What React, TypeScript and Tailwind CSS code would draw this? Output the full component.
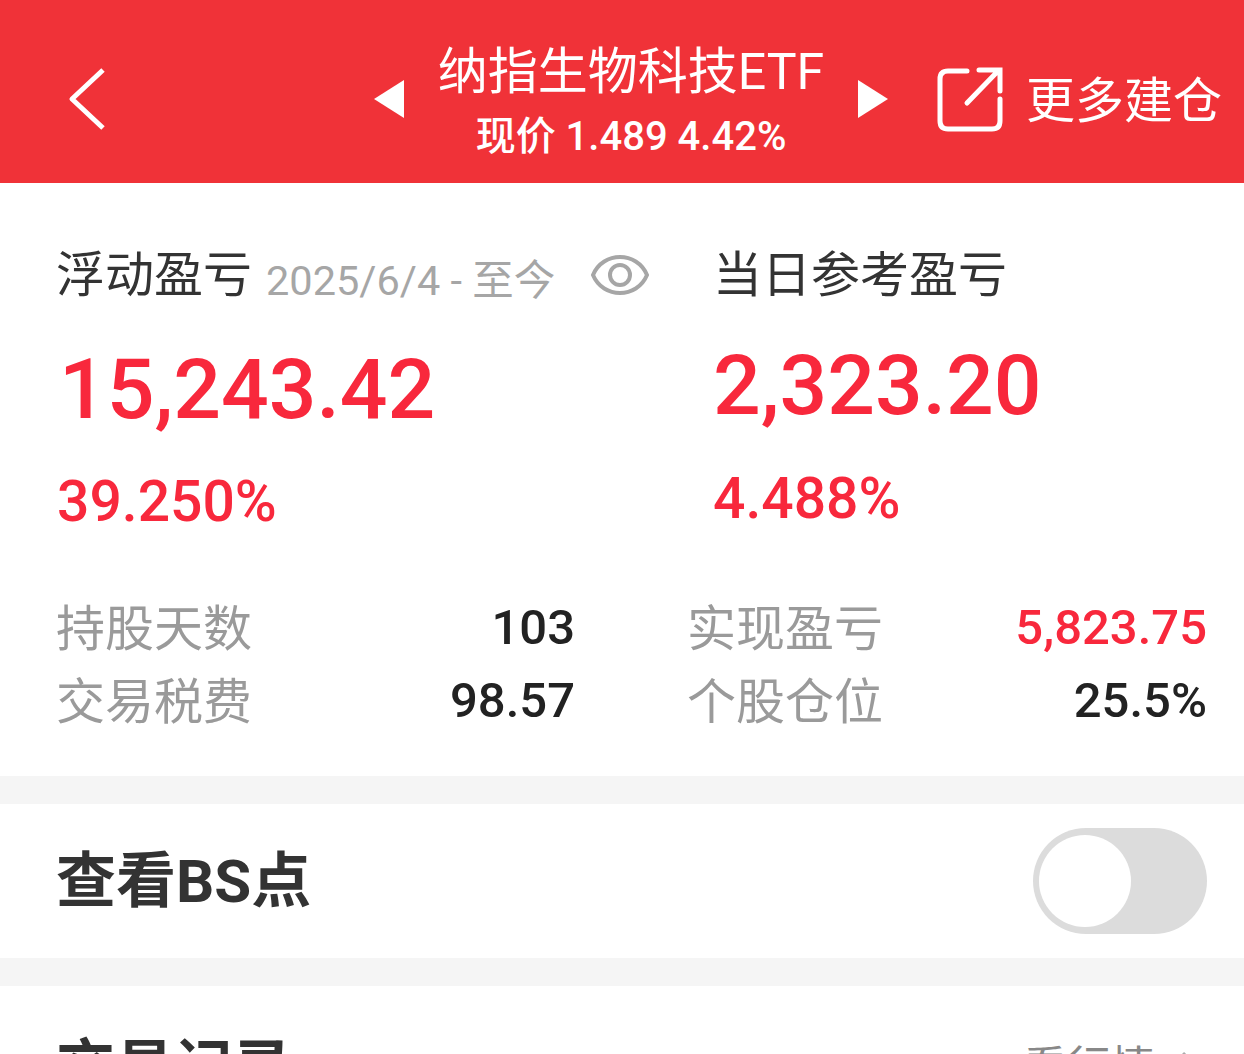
const sans = "font-['Roboto','Noto_Sans_CJK_SC',sans-serif]";

function StatRow({ label, value, red }: { label: string; value: string; red?: boolean }) {
  return (
    <div className="flex h-[73px] items-center justify-between">
      <span className="mt-[2px] text-[49px] leading-none text-[#9a9a9a]">{label}</span>
      <span className={`mt-[-3px] text-[49px] leading-none font-medium ${red ? "text-[#f8283c]" : "text-[#222222]"}`}>{value}</span>
    </div>
  );
}

export default function App() {
  return (
    <div className={`h-[1054px] w-[1244px] overflow-hidden bg-white ${sans}`}>
      <header className="flex h-[183px] items-center bg-[#f03238] pt-[14px] pl-[68px] text-white">
        <svg width="38" height="64" viewBox="0 0 38 64" fill="none" stroke="white" strokeWidth="5">
          <path d="M35 3 L4 32 L35 61" strokeLinejoin="round" />
        </svg>
        <svg width="30" height="38" viewBox="0 0 30 38" fill="white" className="ml-[268px]">
          <path d="M30 0 V38 L0 19 Z" />
        </svg>
        <div className="mt-[4px] flex w-[454px] flex-col items-center">
          <div className="text-[50px] leading-[64px]">纳指生物科技ETF</div>
          <div className="mt-[8px] text-[40px] leading-[50px] font-medium">现价 1.489 4.42%</div>
        </div>
        <svg width="30" height="38" viewBox="0 0 30 38" fill="white">
          <path d="M0 0 V38 L30 19 Z" />
        </svg>
        <svg width="66" height="66" viewBox="0 0 66 66" fill="none" stroke="white" strokeWidth="5" strokeLinecap="round" className="mt-[2px] ml-[49px]">
          <path d="M30 4 H11 Q3 4 3 12 V54 Q3 62 11 62 H55 Q63 62 63 54 V32" />
          <path d="M30 36 L61 4 M42 3 H63 V24" />
        </svg>
        <span className="mt-[6px] ml-[23px] text-[49px] leading-none whitespace-nowrap">更多建仓</span>
      </header>

      <section className="h-[593px] pr-[37px] pl-[56px]">
        <div className="flex pt-[64px]">
          <div className="w-[657px]">
            <div className="flex h-[56px] items-center">
              <span className="text-[49px] leading-none text-[#333333]">浮动盈亏</span>
              <span className="mt-[12px] ml-[14px] text-[41.5px] leading-none text-[#a6a6a6]">2025/6/4 - 至今</span>
              <svg width="58" height="42" viewBox="0 0 58 42" fill="none" stroke="#a6a6a6" strokeWidth="4" className="ml-[36px]">
                <path d="M2 21 C12 -3 46 -3 56 21 C46 45 12 45 2 21 Z" />
                <circle cx="29" cy="21" r="10" />
              </svg>
            </div>
            <div className="mt-[42px] ml-[3px] text-[84px] leading-[90px] font-medium text-[#f8283c]">15,243.42</div>
            <div className="mt-[32px] ml-[1px] text-[57px] leading-[70px] font-medium text-[#f8283c]">39.250%</div>
          </div>
          <div>
            <div className="flex h-[56px] items-center text-[49px] leading-none text-[#333333]">当日参考盈亏</div>
            <div className="mt-[38px] text-[84px] leading-[90px] font-medium text-[#f8283c]">2,323.20</div>
            <div className="mt-[33px] text-[57px] leading-[70px] font-medium text-[#f8283c]">4.488%</div>
          </div>
        </div>
        <div className="mt-[55px] grid grid-cols-[519px_520px] gap-x-[112px]">
          <div>
            <StatRow label="持股天数" value="103" />
            <StatRow label="交易税费" value="98.57" />
          </div>
          <div>
            <StatRow label="实现盈亏" value="5,823.75" red />
            <StatRow label="个股仓位" value="25.5%" />
          </div>
        </div>
      </section>

      <div className="h-[28px] bg-[#f5f5f5]" />

      <section className="flex h-[154px] items-center justify-between pr-[37px] pl-[56px]">
        <span className="mt-[2px] text-[60px] leading-none font-bold text-[#333333]">查看BS点</span>
        <div className="flex h-[106px] w-[174px] items-center rounded-full bg-[#dcdcdc] pl-[6px]">
          <div className="h-[92px] w-[92px] rounded-full bg-white" />
        </div>
      </section>

      <div className="h-[28px] bg-[#f5f5f5]" />

      <section className="flex items-start justify-between pt-[52px] pr-[44px] pl-[56px]">
        <span className="text-[59px] leading-none font-bold text-[#333333]">交易记录</span>
        <span className="mt-[8px] flex items-start text-[44px] leading-none text-[#888888]">
          看行情
          <svg width="20" height="34" viewBox="0 0 20 34" fill="none" stroke="#aaaaaa" strokeWidth="3" className="mt-[4px] ml-[25px]">
            <path d="M3 3 L17 17 L3 31" />
          </svg>
        </span>
      </section>
    </div>
  );
}
